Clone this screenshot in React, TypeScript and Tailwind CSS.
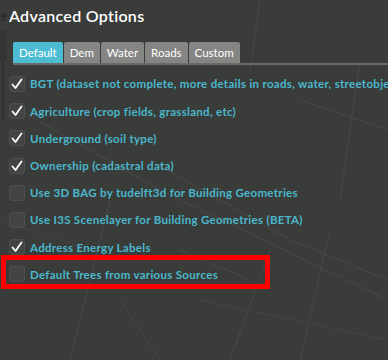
import React from "react";

const items: { label: string; checked: boolean }[] = [
  { label: "BGT (dataset not complete, more details in roads, water, streetobjects)", checked: true },
  { label: "Agriculture (crop fields, grassland, etc)", checked: true },
  { label: "Underground (soil type)", checked: true },
  { label: "Ownership (cadastral data)", checked: true },
  { label: "Use 3D BAG by tudelft3d for Building Geometries", checked: false },
  { label: "Use I3S Scenelayer for Building Geometries (BETA)", checked: false },
  { label: "Address Energy Labels", checked: true },
  { label: "Default Trees from various Sources", checked: false },
];

const tabs = ["Default", "Dem", "Water", "Roads", "Custom"];

function Check() {
  return (
    <svg width="12" height="12" viewBox="0 0 12 12" fill="none">
      <path d="M1.5 6.5 L4.5 10 L10.5 1.5" stroke="#ffffff" strokeWidth="1.8" strokeLinecap="round" strokeLinejoin="round" />
    </svg>
  );
}

export default function App() {
  return (
    <div className="relative w-[388px] h-[360px] overflow-hidden bg-[#3a3c39]" style={{ fontFamily: "Lato, 'Open Sans', sans-serif" }}>
      <svg className="absolute inset-0" width="388" height="360" viewBox="0 0 388 360" fill="none">
        <g stroke="#474a47" strokeWidth="1">
          <path d="M20 110 L160 190 L388 300" />
          <path d="M150 160 L290 240 L388 280" />
          <path d="M260 0 L250 70" />
          <path d="M300 100 L388 130" />
          <path d="M110 200 L70 360" />
          <path d="M270 250 L230 360" />
          <path d="M330 230 L300 360" />
          <path d="M180 250 L250 280" />
          <path d="M360 60 L340 200" />
        </g>
        <g stroke="#434643" strokeWidth="1">
          <path d="M0 220 L90 250" />
          <path d="M200 300 L388 340" />
          <path d="M120 300 L160 360" />
        </g>
        <g stroke="#2c2e2c" strokeWidth="2">
          <path d="M0 16 L7 16" />
          <path d="M3.5 12 L3.5 21" />
        </g>
        <rect x="0" y="30" width="7" height="30" fill="#333532" />
        <path d="M3 60 L3 120" stroke="#2f312f" strokeWidth="2" />
      </svg>

      <div className="relative flex flex-col">
        <div className="pl-[9px] pt-[6px] text-[16px] leading-[20px] font-semibold text-white tracking-[0.3px]">Advanced Options</div>

        <div className="mt-[16px] ml-[13px] flex items-end gap-[1px] border-b-2 border-[#6a6b69]">
          {tabs.map((t, i) => (
            <div
              key={t}
              className={
                i === 0
                  ? "h-[21px] px-[6px] flex items-center rounded-t-[2px] bg-[#4cbcd3] text-white text-[11.5px]"
                  : "h-[21px] px-[6px] flex items-center rounded-t-[2px] bg-[#858584] text-white text-[11.5px]"
              }
            >
              {t}
            </div>
          ))}
        </div>

        <div className="mt-[11px] flex flex-col gap-[11px] pl-[9px]">
          {items.map((it) => (
            <div key={it.label} className="flex items-center h-[16.2px] gap-[5px] whitespace-nowrap">
              <div className="w-[16px] h-[16px] shrink-0 rounded-[3px] bg-[#434542] border border-[#4d504c] flex items-center justify-center">
                {it.checked && <Check />}
              </div>
              <span className="text-[11.5px] font-bold text-[#4ab7cd] tracking-[0.3px]">{it.label}</span>
            </div>
          ))}
        </div>
      </div>

      <div className="absolute left-[1px] top-[255px] w-[269px] h-[34px] border-[5px] border-[#ff0000]" />
    </div>
  );
}
